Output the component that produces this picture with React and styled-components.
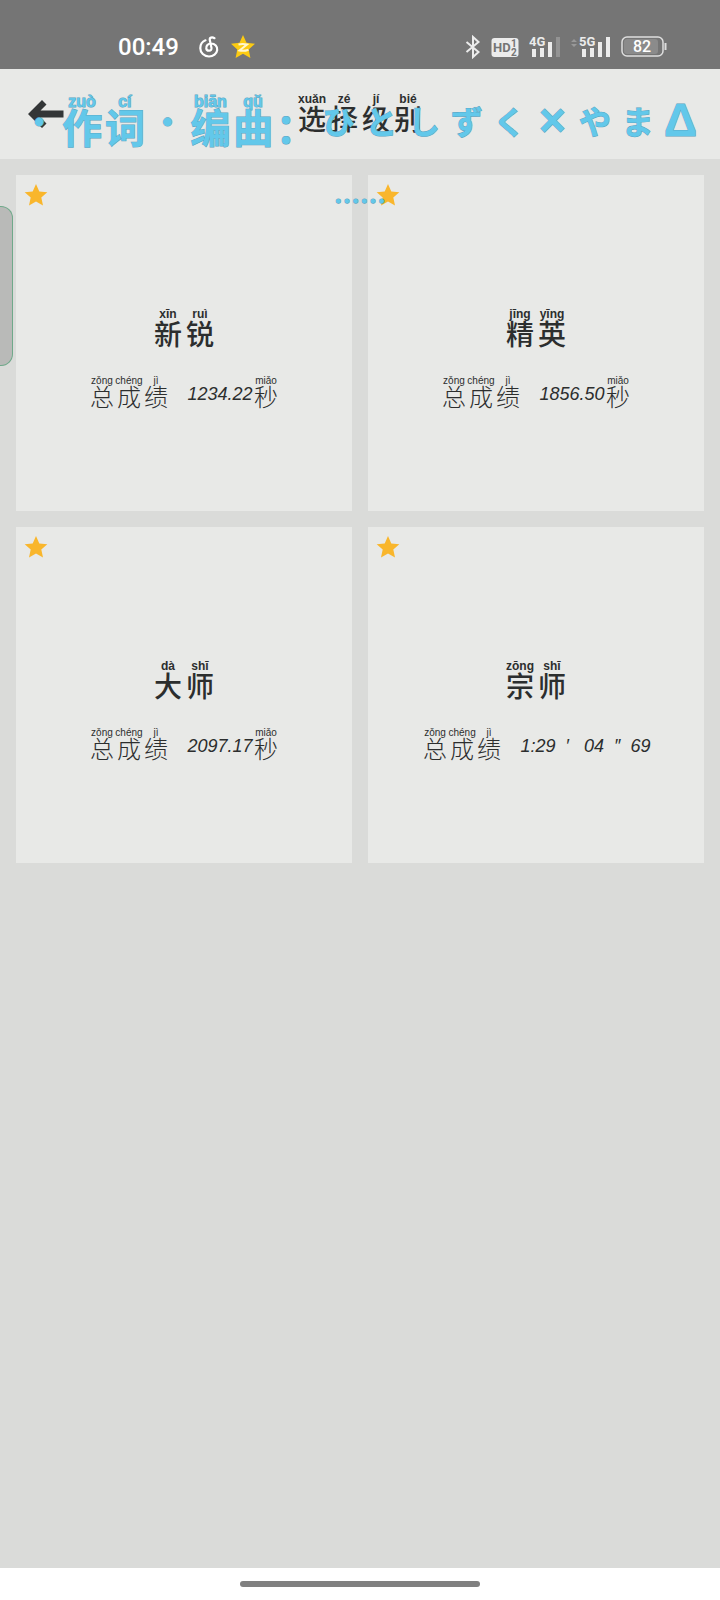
import React from 'react';
import styled, { createGlobalStyle, css } from 'styled-components';

const GlobalStyle = createGlobalStyle`
  *, *::before, *::after {
    box-sizing: border-box;
  }
  body {
    margin: 0;
    background: #dadbd9;
    color: #2c2e2e;
    font-family: 'Noto Sans CJK SC', 'Noto Sans', sans-serif;
  }
`;

const Screen = styled.div`
  position: relative;
  display: flex;
  flex-direction: column;
  min-height: 100vh;
  overflow: hidden;
`;

const StatusBar = styled.div`
  display: flex;
  align-items: flex-end;
  justify-content: space-between;
  height: 69px;
  padding: 0 53px 8px 118px;
  background: #757575;
  color: #ececec;
`;

const StatusGroup = styled.div`
  display: flex;
  align-items: center;
  gap: ${props => props.$gap};
  height: 28px;
`;

const Clock = styled.time`
  margin-right: 8px;
  color: #fff;
  font: 500 24px/28px Roboto, sans-serif;
`;

const Header = styled.header`
  display: grid;
  grid-template-columns: 1fr auto 1fr;
  align-items: center;
  height: 90px;
  padding: 0 28px;
  background: #e8e9e7;
`;

const BackButton = styled.button`
  justify-self: start;
  display: flex;
  padding: 0;
  border: 0;
  background: none;
  color: #333637;
`;

const Ruby = styled.ruby`
  display: flex;
  flex-direction: column;
  align-items: center;
`;

const Base = styled.span`
  display: block;
`;

const Pinyin = styled.rt`
  display: block;
  font-family: 'Liberation Sans', sans-serif;
  white-space: nowrap;
`;

const heading = css`
  display: flex;
  margin: 0;
  font-size: 28px;
  font-weight: 500;

  ${Ruby} {
    width: 32px;
  }
  ${Base} {
    line-height: 26px;
  }
  ${Pinyin} {
    font-size: 12px;
    font-weight: 700;
    line-height: 12px;
  }
`;

const Title = styled.h1`
  ${heading}
  padding-bottom: 4px;
`;

const LevelName = styled.h2`
  ${heading}
`;

const Levels = styled.main`
  display: grid;
  grid-template-columns: repeat(2, 1fr);
  gap: 16px;
  padding: 16px;
`;

const Card = styled.a`
  display: flex;
  flex-direction: column;
  aspect-ratio: 1;
  padding: 8px;
  background: #e8e9e7;
  color: inherit;
  text-decoration: none;
`;

const CardBody = styled.div`
  flex: 1;
  display: flex;
  flex-direction: column;
  align-items: center;
  justify-content: center;
  gap: 30px;
  padding-top: 4px;
`;

const Score = styled.p`
  display: flex;
  align-items: flex-end;
  margin: 0;
  font-size: 24px;
  font-weight: 300;

  ${Ruby} {
    width: 27px;
  }
  ${Base} {
    line-height: 20px;
  }
  ${Pinyin} {
    font-size: 10px;
    font-weight: 400;
    line-height: 10px;
  }
`;

const Value = styled.span`
  padding-left: 18px;
  font: italic 400 18px/24px 'Liberation Sans Narrow', 'Liberation Sans', sans-serif;
  white-space: pre;
`;

const NavBar = styled.footer`
  display: flex;
  align-items: center;
  justify-content: center;
  height: 32px;
  margin-top: auto;
  background: #fff;
`;

const HomeBar = styled.div`
  width: 240px;
  height: 6px;
  border-radius: 3px;
  background: #808080;
`;

/* floats over the app, like a desktop lyric window */
const Lyrics = styled.div`
  position: absolute;
  top: 90px;
  left: 0;
  right: 0;
  padding: 0 18px;
  color: #62c8ea;
  font-weight: 700;
  -webkit-text-stroke: 1px #58a3c0;
  paint-order: stroke fill;
  pointer-events: none;
`;

const LyricLine = styled.div`
  display: grid;
  grid-template-columns: repeat(16, 1fr);
  height: 60px;

  ${Base} {
    font-size: 40px;
    line-height: 24px;
  }
  ${Pinyin} {
    height: 24px;
    font-size: 16px;
    line-height: 24px;
  }
`;

const Kana = styled.span`
  display: flex;
  align-items: center;
  justify-content: center;
  font-size: 32px;
  line-height: 32px;
`;

const Mark = styled(Kana)`
  font-family: 'Liberation Sans', sans-serif;
  font-size: 46px;
`;

const LyricNext = styled.div`
  margin-top: 20px;
  font-size: 26px;
  line-height: 60px;
  text-align: center;
`;

const SideHandle = styled.div`
  position: absolute;
  top: 206px;
  left: 0;
  width: 13px;
  height: 160px;
  border: 1px solid #6fa98a;
  border-left: 0;
  border-radius: 0 12px 12px 0;
  background: #b9bab8;
`;

const StarIcon = () => (
  <svg width="24" height="24" viewBox="0 0 24 24" aria-hidden="true">
    <path
      fill="#f9b62c"
      d="M12 1l3.3 7.4 8 .9-6 5.3 1.7 7.9-7-4-7 4 1.7-7.9-6-5.3 8-.9z"
    />
  </svg>
);

const MusicIcon = () => (
  <svg width="20" height="24" viewBox="0 0 20 24" fill="none" stroke="#fff" strokeWidth="2.2" strokeLinecap="round">
    <path d="M15.5 3.2c-2.500-1.500-5.200-.7-4.700 1.800l1.700 8c.5 3.200-4.700 3.800-5.200.5-.4-2.800 1.700-5 4.700-5 4 0 6.700 2.800 6.200 6.700-.5 3.600-3.900 6.300-8.200 6.300-5 0-8.700-3.700-8.700-8.300C1.300 9.500 3.500 6.500 6.500 5.300" />
  </svg>
);

const QzoneIcon = () => (
  <svg width="24" height="24" viewBox="0 0 24 24">
    <path fill="#fccb12" d="M12 0l3.500 7.700 8.500 1-6.300 5.700 1.700 8.600-7.400-4.200L4.600 23l1.700-8.600L0 8.700l8.500-1z" />
    <path fill="none" stroke="#fff7cf" strokeWidth="2" d="M7.500 9.500c3-.6 5.500-.6 8.500 0l-7.500 6c3 .7 5.500.6 9-.8" />
  </svg>
);

const BluetoothIcon = () => (
  <svg width="16" height="24" viewBox="0 0 16 24" fill="none" stroke="#ececec" strokeWidth="2">
    <path d="M1.500 7l12 10L8 22V2l5.500 5-12 10" />
  </svg>
);

const HdIcon = () => (
  <svg width="28" height="24" viewBox="0 0 28 24" fontFamily="Roboto" fontWeight="700" fill="#757575">
    <rect x="0.500" y="3" width="27" height="19" rx="3" fill="#ececec" />
    <text x="2" y="17" fontSize="13">HD</text>
    <text x="20" y="12" fontSize="10">1</text>
    <text x="20" y="21" fontSize="10">2</text>
  </svg>
);

const SignalIcon = ({ label, weak }) => (
  <svg
    width={weak ? 32 : 40}
    height="24"
    viewBox={weak ? '10 0 32 24' : '2 0 40 24'}
    fill="#ececec"
  >
    {!weak && <path fill="#999" d="M2 7l3-3 3 3zM2 9l3 3 3-3z" />}
    <text x="10" y="11" fontSize="13" fontFamily="Roboto" fontWeight="700">
      {label}
    </text>
    <path d="M13 14h4v8h-4zM21 13h4v9h-4zM29 7h4v15h-4z" />
    <path fill={weak ? '#939393' : '#ececec'} d="M37 2h4v20h-4z" />
  </svg>
);

const BatteryIcon = ({ level }) => (
  <svg width="46" height="24" viewBox="0 0 46 24">
    <rect x="3" y="4" width="34" height="15" rx="3" fill="#8b8b8b" />
    <rect x="1" y="2" width="41" height="19" rx="5" fill="none" stroke="#dedede" strokeWidth="1.500" />
    <path stroke="#dedede" strokeWidth="2" d="M44.500 8v7" />
    <text x="21" y="17" textAnchor="middle" fontSize="16" fontFamily="Roboto" fontWeight="500" fill="#fff">
      {level}
    </text>
  </svg>
);

const BackIcon = () => (
  <svg width="36" height="28" viewBox="0 0 36 28" aria-hidden="true">
    <path fill="currentColor" d="M0 14L14 0l4.500 4.500-6 6H35.500v7H12.500l6 6L14 28z" />
  </svg>
);

const Annotated = ({ text, pinyin }) => (
  <Ruby>
    <Pinyin>{pinyin}</Pinyin>
    <Base>{text}</Base>
  </Ruby>
);

const annotate = pairs =>
  pairs.map(([text, pinyin]) => (
    <Annotated key={text} text={text} pinyin={pinyin} />
  ));

const title = [['选', 'xuǎn'], ['择', 'zé'], ['级', 'jí'], ['别', 'bié']];
const total = [['总', 'zǒng'], ['成', 'chéng'], ['绩', 'jì']];
const seconds = [['秒', 'miǎo']];

const levels = [
  { name: [['新', 'xīn'], ['锐', 'ruì']], value: '1234.22', unit: seconds },
  { name: [['精', 'jīng'], ['英', 'yīng']], value: '1856.50', unit: seconds },
  { name: [['大', 'dà'], ['师', 'shī']], value: '2097.17', unit: seconds },
  { name: [['宗', 'zōng'], ['师', 'shī']], value: '1:29  ′   04  ″  69', unit: [] }
];

const App = () => (
  <Screen>
    <GlobalStyle />
    <StatusBar>
      <StatusGroup $gap="12px">
        <Clock>00:49</Clock>
        <MusicIcon />
        <QzoneIcon />
      </StatusGroup>
      <StatusGroup $gap="10px">
        <BluetoothIcon />
        <HdIcon />
        <SignalIcon label="4G" weak />
        <SignalIcon label="5G" />
        <BatteryIcon level={82} />
      </StatusGroup>
    </StatusBar>
    <Header>
      <BackButton aria-label="返回">
        <BackIcon />
      </BackButton>
      <Title>{annotate(title)}</Title>
    </Header>
    <Levels>
      {levels.map(level => (
        <Card key={level.value} href="#">
          <StarIcon />
          <CardBody>
            <LevelName>{annotate(level.name)}</LevelName>
            <Score>
              {annotate(total)}
              <Value>{level.value}</Value>
              {annotate(level.unit)}
            </Score>
          </CardBody>
        </Card>
      ))}
    </Levels>
    <NavBar>
      <HomeBar />
    </NavBar>
    <SideHandle />
    <Lyrics>
      <LyricLine>
        <Kana>・</Kana>
        <Annotated text="作" pinyin="zuò" />
        <Annotated text="词" pinyin="cí" />
        <Kana>・</Kana>
        <Annotated text="编" pinyin="biān" />
        <Annotated text="曲" pinyin="qǔ" />
        <Annotated text="：" />
        {[...'ひとしずく'].map(char => (
          <Kana key={char}>{char}</Kana>
        ))}
        <Mark>×</Mark>
        <Kana>や</Kana>
        <Kana>ま</Kana>
        <Mark>Δ</Mark>
      </LyricLine>
      <LyricNext>……</LyricNext>
    </Lyrics>
  </Screen>
);

export default App;
